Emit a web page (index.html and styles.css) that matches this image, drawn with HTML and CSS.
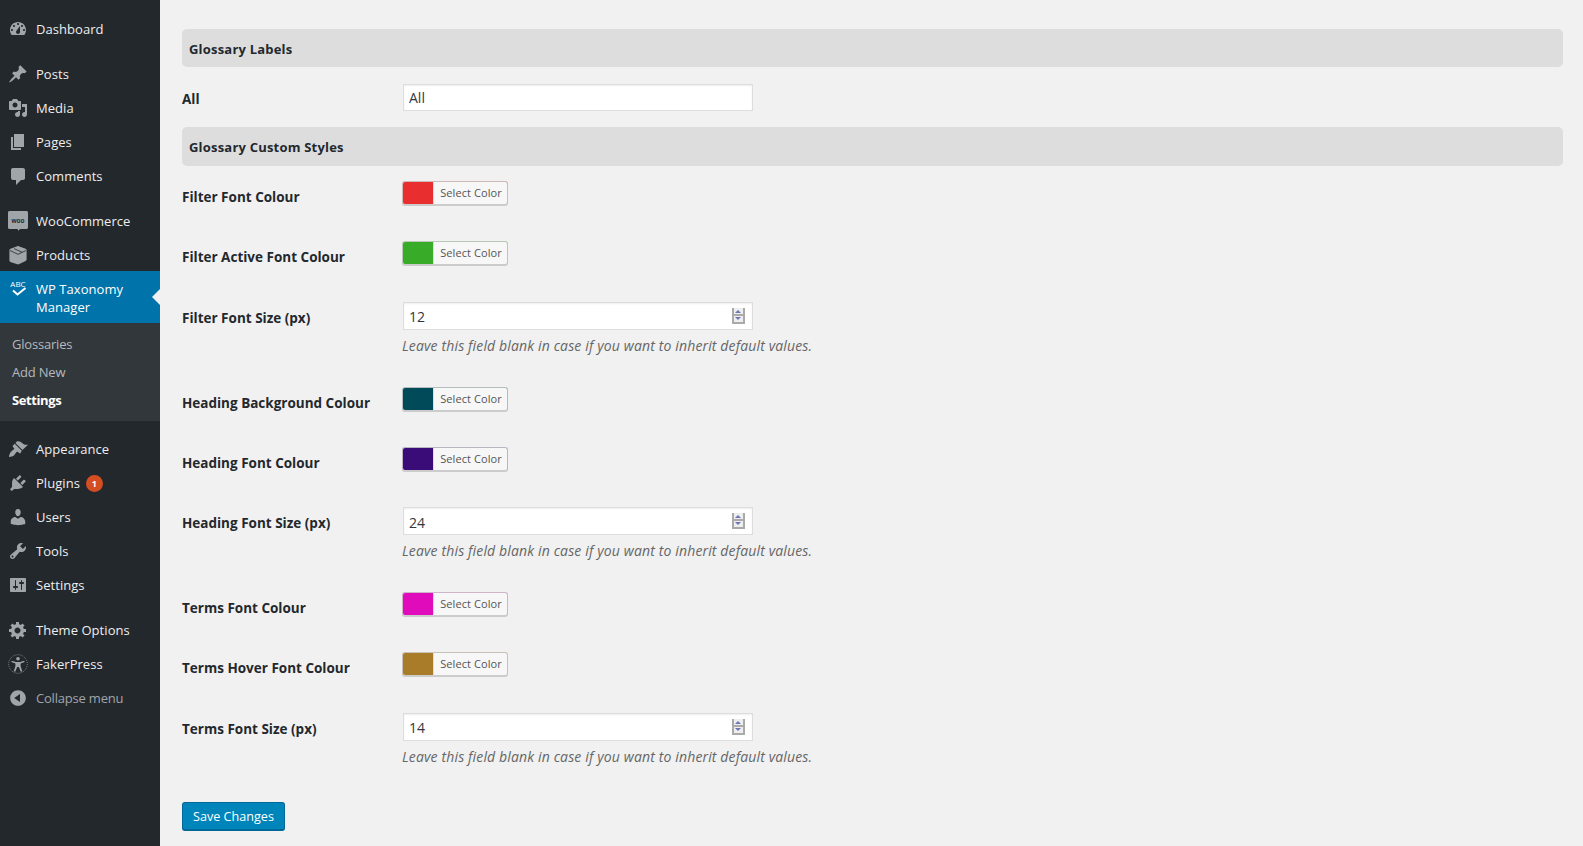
FILE: index.html
```html
<!DOCTYPE html>
<html lang="en">
<head>
<meta charset="utf-8">
<title>WP Taxonomy Manager Settings</title>
<link rel="stylesheet" href="styles.css">
</head>
<body>
<div class="shell">
<aside class="sidebar">
<nav class="menu">
<a class="item"><svg class="ico" viewBox="0 0 20 20"><path fill-rule="evenodd" d="M3.76 16h12.48c1.1-1.37 1.76-3.11 1.76-5 0-4.42-3.58-8-8-8s-8 3.58-8 8c0 1.89.66 3.63 1.76 5zM10 4c.55 0 1 .45 1 1s-.45 1-1 1-1-.45-1-1 .45-1 1-1zM6 6c.55 0 1 .45 1 1s-.45 1-1 1-1-.45-1-1 .45-1 1-1zm8 0c.55 0 1 .45 1 1s-.45 1-1 1-1-.45-1-1 .45-1 1-1zm-5.37 5.55L12 7v6c0 1.1-.9 2-2 2s-2-.9-2-2c0-.57.24-1.08.63-1.45zM4 10c.55 0 1 .45 1 1s-.45 1-1 1-1-.45-1-1 .45-1 1-1zm12 0c.55 0 1 .45 1 1s-.45 1-1 1-1-.45-1-1 .45-1 1-1z"/></svg><span>Dashboard</span></a>
<div class="sep"></div>
<a class="item"><svg class="ico" viewBox="0 0 20 20"><path d="M10.44 3.02l1.82-1.82 6.36 6.35-1.83 1.82c-1.05-.68-2.48-.57-3.41.36l-.75.75c-.92.93-1.04 2.35-.35 3.41l-1.83 1.82-2.41-2.41-2.8 2.79c-.42.42-3.38 2.71-3.8 2.29s1.86-3.39 2.28-3.81l2.79-2.79L4.1 9.36l1.83-1.82c1.05.69 2.48.57 3.4-.36l.75-.75c.93-.92 1.05-2.35.36-3.41z"/></svg><span>Posts</span></a>
<a class="item"><svg class="ico" viewBox="0 0 20 20"><path fill-rule="evenodd" d="M13 11V4c0-.55-.45-1-1-1h-1.67L9 1H5L3.67 3H2c-.55 0-1 .45-1 1v7c0 .55.45 1 1 1h10c.55 0 1-.45 1-1zM7 4.5c1.38 0 2.5 1.12 2.5 2.5S8.38 9.5 7 9.5 4.5 8.38 4.5 7 5.62 4.5 7 4.5zM14 6h5v10.5c0 1.38-1.12 2.5-2.5 2.5S14 17.88 14 16.5s1.12-2.5 2.5-2.5c.17 0 .34.02.5.05V9h-3V6zm-4 8.05V13h2v3.5c0 1.38-1.12 2.5-2.5 2.5S7 17.88 7 16.5 8.12 14 9.5 14c.17 0 .34.02.5.05z"/></svg><span>Media</span></a>
<a class="item"><svg class="ico" viewBox="0 0 20 20"><path d="M6 15V2h10v13H6zm-1 1h8v2H3V5h2v11z"/></svg><span>Pages</span></a>
<a class="item"><svg class="ico" viewBox="0 0 20 20"><path d="M5 2h10c1.1 0 2 .9 2 2v8c0 1.1-.9 2-2 2h-2l-5 5v-5H5c-1.1 0-2-.9-2-2V4c0-1.1.9-2 2-2z"/></svg><span>Comments</span></a>
<div class="sep"></div>
<a class="item"><svg class="ico" viewBox="0 0 20 20"><path d="M1.5 0h17c.83 0 1.5.67 1.5 1.500v15c0 .83-.67 1.500-1.500 1.500H12l-1.500 1.800-1-1.800H1.500C.67 18 0 17.330 0 16.500v-15C0 .67.67 0 1.500 0z"/><text class="woo" x="10" y="11.500" text-anchor="middle">woo</text></svg><span>WooCommerce</span></a>
<a class="item"><svg class="ico" viewBox="0 0 20 20"><path d="M9.200 1.200c.5-.2 1.100-.2 1.600 0l6.800 2.600c.6.200 1 .8 1 1.400v9.300c0 .6-.4 1.200-1 1.500l-6.800 3.300c-.5.200-1.100.2-1.600 0L2.400 16.900c-.6-.3-1-.9-1-1.500V5.200c0-.6.400-1.200 1-1.400z"/><path class="cut" d="M2 5.500l8 3.800 8-3.800M6 3.600l8 3.600"/></svg><span>Products</span></a>
<a class="item current"><svg class="ico abc" viewBox="0 0 20 20"><text class="abctext" x="10" y="6.500" text-anchor="middle">ABC</text><path class="check" d="M5 10.500l4.500 4 8-6.500"/></svg><span>WP Taxonomy Manager</span></a>
<ul class="sub">
<li>Glossaries</li>
<li>Add New</li>
<li class="sub-on">Settings</li>
</ul>
<div class="sep"></div>
<a class="item"><svg class="ico" viewBox="0 0 20 20"><path d="M14.480 11.060L7.410 3.990l1.500-1.500c.5-.56 2.300-.47 3.510.32 1.210.8 1.430 1.280 2.910 2.100 1.180.64 2.450 1.260 4.680.75l-5.530 5.400zm-.71.71L6.700 4.700 4.930 6.470c-.39.39-.39 1.020 0 1.410l1.060 1.060c.39.39.39 1.030 0 1.420-.6.6-1.430 1.110-2.210 1.690-.35.26-.7.53-1.010.84-.83.83-1.770 3.500-1.770 5.110 1.560 0 4.200-.9 5.070-1.770.3-.3.57-.66.84-1.010.58-.78 1.090-1.610 1.690-2.210.39-.39 1.030-.39 1.420 0l1.060 1.060c.39.39 1.020.39 1.410 0z"/></svg><span>Appearance</span></a>
<a class="item"><svg class="ico" viewBox="0 0 20 20"><path d="M13.110 4.360L9.870 7.600 8 5.730l3.240-3.240c.35-.34 1.050-.2 1.560.32.52.51.66 1.210.31 1.550zm-8 1.770l.91-1.120 9.010 9.010-1.190.84c-.71.71-2.630 1.160-3.820 1.160H6.140L4.900 17.260c-.59.59-1.540.59-2.120 0-.59-.58-.59-1.530 0-2.120l1.240-1.240v-3.880c0-1.130.4-3.190 1.090-3.890zm7.260 3.970l3.240-3.240c.34-.35 1.040-.2 1.550.31.52.52.66 1.220.32 1.570l-3.240 3.240z"/></svg><span>Plugins</span><b class="badge">1</b></a>
<a class="item"><svg class="ico" viewBox="0 0 20 20"><path d="M10 9.250c-2.270 0-2.730-3.440-2.730-3.440C7 4.020 7.820 2 9.970 2c2.160 0 2.980 2.020 2.710 3.810 0 0-.41 3.440-2.680 3.440zm0 2.570L12.720 10c2.390 0 4.520 2.330 4.520 4.530v2.490s-3.650 1.130-7.240 1.130c-3.650 0-7.240-1.130-7.240-1.130v-2.490c0-2.250 1.940-4.480 4.470-4.480z"/></svg><span>Users</span></a>
<a class="item"><svg class="ico" viewBox="0 0 20 20"><path fill-rule="evenodd" d="M16.680 9.770c-1.340 1.340-3.300 1.670-4.950.99l-5.410 6.520c-.99.99-2.590.99-3.580 0s-.99-2.590 0-3.570l6.520-5.420c-.68-1.650-.35-3.610.99-4.950 1.280-1.280 3.120-1.620 4.720-1.060l-2.890 2.890 2.820 2.820 2.860-2.870c.53 1.580.18 3.390-1.080 4.650zM3.810 16.210c.4.39 1.040.39 1.430 0 .4-.4.4-1.040 0-1.430-.39-.4-1.030-.4-1.430 0-.39.39-.39 1.030 0 1.430z"/></svg><span>Tools</span></a>
<a class="item"><svg class="ico" viewBox="0 0 20 20"><path fill-rule="evenodd" d="M18 16V4c0-.55-.45-1-1-1H3c-.55 0-1 .45-1 1v12c0 .55.45 1 1 1h14c.55 0 1-.45 1-1zM8 11h1c.55 0 1 .45 1 1s-.45 1-1 1H8v1.500c0 .28-.22.5-.5.5s-.5-.22-.5-.5V13H6c-.55 0-1-.45-1-1s.45-1 1-1h1V5.500c0-.28.22-.5.5-.5s.5.22.5.5V11zm5-2h-1c-.55 0-1-.45-1-1s.45-1 1-1h1V5.500c0-.28.22-.5.5-.5s.5.22.5.5V7h1c.55 0 1 .45 1 1s-.45 1-1 1h-1v5.500c0 .28-.22.5-.5.5s-.5-.22-.5-.5V9z"/></svg><span>Settings</span></a>
<div class="sep"></div>
<a class="item"><svg class="ico" viewBox="0 0 20 20"><path fill-rule="evenodd" d="M18 12h-2.180c-.17.7-.44 1.350-.81 1.930l1.540 1.540-2.100 2.100-1.540-1.540c-.58.36-1.230.63-1.910.79V19H8v-2.180c-.68-.16-1.330-.43-1.910-.79l-1.540 1.540-2.120-2.120 1.540-1.540c-.36-.58-.63-1.230-.79-1.910H1V9.030h2.170c.16-.7.44-1.350.8-1.940L2.430 5.550l2.100-2.100 1.540 1.540c.58-.37 1.240-.64 1.930-.81V2h3v2.180c.68.16 1.330.43 1.910.79l1.540-1.540 2.120 2.120-1.540 1.540c.36.59.64 1.240.8 1.940H18V12zm-8.500 1.500c1.660 0 3-1.340 3-3s-1.340-3-3-3-3 1.340-3 3 1.340 3 3 3z"/></svg><span>Theme Options</span></a>
<a class="item"><svg class="ico" viewBox="0 0 20 20"><circle class="dash" cx="10" cy="10" r="9.300"/><circle cx="10" cy="4.800" r="1.800"/><path d="M3.800 6.800l4 1.300h4.400l4-1.300.4 1.300-4 1.400v2.700l1.700 5-1.500.5L10.800 13H9.200l-2 4.700-1.500-.5 1.700-5V9.500l-4-1.400z"/></svg><span>FakerPress</span></a>
<a class="item collapse"><svg class="ico" viewBox="0 0 20 20"><path fill-rule="evenodd" d="M10 2.160c4.330 0 7.840 3.510 7.840 7.840s-3.510 7.840-7.840 7.840S2.160 14.330 2.160 10 5.710 2.160 10 2.160zm2 11.720V6.120L6.180 9.970z"/></svg><span>Collapse menu</span></a>
</nav>
</aside>
<main class="content">
<h2 class="bar">Glossary Labels</h2>
<div class="row-all">
<label class="label">All</label>
<div class="field"><input class="input" type="text" value="All"></div>
</div>
<h2 class="bar bar-tall">Glossary Custom Styles</h2>
<div class="row">
<label class="label">Filter Font Colour</label>
<div class="field"><button class="picker c-red" type="button"><i class="swatch"></i><span class="pick-text">Select Color</span></button></div>
</div>
<div class="row">
<label class="label">Filter Active Font Colour</label>
<div class="field"><button class="picker c-green" type="button"><i class="swatch"></i><span class="pick-text">Select Color</span></button></div>
</div>
<div class="row row-num">
<label class="label">Filter Font Size (px)</label>
<div class="field">
<div class="num"><input class="input" type="text" value="12"><span class="spin"><i class="up"></i><i class="down"></i></span></div>
<p class="desc">Leave this field blank in case if you want to inherit default values.</p>
</div>
</div>
<div class="row">
<label class="label">Heading Background Colour</label>
<div class="field"><button class="picker c-teal" type="button"><i class="swatch"></i><span class="pick-text">Select Color</span></button></div>
</div>
<div class="row">
<label class="label">Heading Font Colour</label>
<div class="field"><button class="picker c-purple" type="button"><i class="swatch"></i><span class="pick-text">Select Color</span></button></div>
</div>
<div class="row row-num">
<label class="label">Heading Font Size (px)</label>
<div class="field">
<div class="num"><input class="input" type="text" value="24"><span class="spin"><i class="up"></i><i class="down"></i></span></div>
<p class="desc">Leave this field blank in case if you want to inherit default values.</p>
</div>
</div>
<div class="row">
<label class="label">Terms Font Colour</label>
<div class="field"><button class="picker c-magenta" type="button"><i class="swatch"></i><span class="pick-text">Select Color</span></button></div>
</div>
<div class="row">
<label class="label">Terms Hover Font Colour</label>
<div class="field"><button class="picker c-brown" type="button"><i class="swatch"></i><span class="pick-text">Select Color</span></button></div>
</div>
<div class="row row-num">
<label class="label">Terms Font Size (px)</label>
<div class="field">
<div class="num"><input class="input" type="text" value="14"><span class="spin"><i class="up"></i><i class="down"></i></span></div>
<p class="desc">Leave this field blank in case if you want to inherit default values.</p>
</div>
</div>
<button class="save" type="button">Save Changes</button>
</main>
</div>
</body>
</html>
```
FILE: styles.css
```css
* { box-sizing: border-box; }
html, body { margin: 0; height: 100%; overflow: hidden; }
body { background: #f1f1f1; color: #23282d; font: 13px/1.4 "Open Sans", "Noto Sans", sans-serif; }
.shell { display: flex; min-height: 846px; }

.sidebar { width: 160px; flex: none; background: #23282d; padding-top: 12px; }
.menu { display: flex; flex-direction: column; }
.sep { height: 11px; }
.item { display: flex; align-items: center; height: 34px; padding-left: 8px; color: #eee; font-size: 13px; letter-spacing: .05px; line-height: 18px; position: relative; }
.item span { margin-left: 8px; }
.ico { width: 20px; height: 20px; flex: none; fill: #a0a5aa; overflow: visible; }
.cut { fill: none; stroke: #23282d; stroke-width: .8; }
.woo { font: 700 6.500px "Liberation Sans", sans-serif; fill: #23282d; }
.dash { fill: none; stroke: #a0a5aa; stroke-width: .7; stroke-dasharray: 1 1; }
.current { height: 52px; margin-top: -1px; background: #0073aa; color: #fff; align-items: flex-start; padding-top: 9px; }
.current::after { content: ""; position: absolute; right: 0; top: 18px; border: 8px solid transparent; border-right-color: #f1f1f1; border-left-width: 0; }
.abc .abctext { font: 400 8px "Open Sans", sans-serif; fill: #fff; }
.check { fill: none; stroke: #fff; stroke-width: 2; }
.sub { list-style: none; margin: 0; padding: 7px 0; background: #32373c; font-size: 13px; letter-spacing: -.2px; }
.sub li { height: 28px; line-height: 28px; padding-left: 12px; color: #b4b9be; }
.sub .sub-on { color: #fff; font-weight: 700; letter-spacing: -.4px; }
.badge { margin-left: 6px; width: 17px; height: 17px; border-radius: 50%; background: #d54e21; color: #fff; font-size: 9px; line-height: 17px; text-align: center; font-weight: 700; }
.collapse { color: #a0a5aa; letter-spacing: -.2px; }

.content { flex: 1; min-width: 0; padding: 29px 20px 0 22px; }
.bar { margin: 0; height: 38px; padding-left: 7px; background: #ddd; border-radius: 5px; font-size: 13px; letter-spacing: .2px; line-height: 40px; font-weight: 700; color: #23282d; }
.bar-tall { height: 39px; }
.row { display: flex; height: 60.250px; padding-top: 15px; }
.row-num { height: 85.100px; }
.row-all { display: flex; padding: 17px 0 16px; }
.label { width: 220px; flex: none; padding-top: 7px; font-weight: 700; font-size: 13.500px; line-height: 18px; color: #23282d; }
.row-all .label { padding-top: 6px; }
.field { flex: 1; min-width: 0; }
.input { display: block; width: 350px; height: 27px; margin-left: 1px; padding: 0 5px; border: 1px solid #ddd; border-radius: 0; background: #fff; color: #32373c; font: 14px "Open Sans", sans-serif; outline: 0; box-shadow: inset 0 1px 2px rgba(0,0,0,.07); }
.num { position: relative; width: 351px; height: 28px; }
.num .input { height: 28px; padding-top: 2px; }
.spin { position: absolute; right: 8px; top: 6px; width: 13px; height: 16px; border: 0 solid #aaa; border-width: 0 2px 2px; background: #eee; display: flex; flex-direction: column; }
.spin i { flex: 1; display: block; position: relative; }
.up { border-bottom: 2px solid #aaa; }
.up::after, .down::after { content: ""; position: absolute; left: 1px; border: 3px solid transparent; }
.up::after { bottom: 1px; border-top: 0; border-bottom-color: #6c76b4; }
.down::after { top: 1px; border-bottom: 0; border-top-color: #6c76b4; }
.desc { margin: 5px 0 0 0; height: 22px; font-size: 14px; letter-spacing: .14px; line-height: 22px; font-style: italic; color: #666; }
.picker { display: flex; width: 106px; height: 24px; margin: 0; padding: 0; border: 1px solid color-mix(in srgb, var(--swatch) 12%, #ccc); border-bottom-color: #ccc; border-radius: 3px; background: #f7f7f7; box-shadow: 0 1px 0 #ccc; overflow: hidden; }
.swatch { width: 30px; height: 100%; flex: none; display: block; background: var(--swatch); }
.pick-text { flex: 1; padding-left: 1px; font: 11px/22px "Open Sans", sans-serif; letter-spacing: .08px; color: #555; text-align: center; border-left: 1px solid #ddd; }
.c-red { --swatch: #e82e2e; }
.c-green { --swatch: #38ac28; }
.c-teal { --swatch: #004a5a; }
.c-purple { --swatch: #3a0c78; }
.c-magenta { --swatch: #e00cbc; }
.c-brown { --swatch: #a87c28; }
.save { display: block; margin-top: 19.500px; width: 103px; height: 29px; padding: 0; border: 1px solid #006799; border-bottom-width: 2px; border-radius: 3px; background: #0085ba; color: #fff; font: 12.600px/28px "Open Sans", sans-serif; }
```
